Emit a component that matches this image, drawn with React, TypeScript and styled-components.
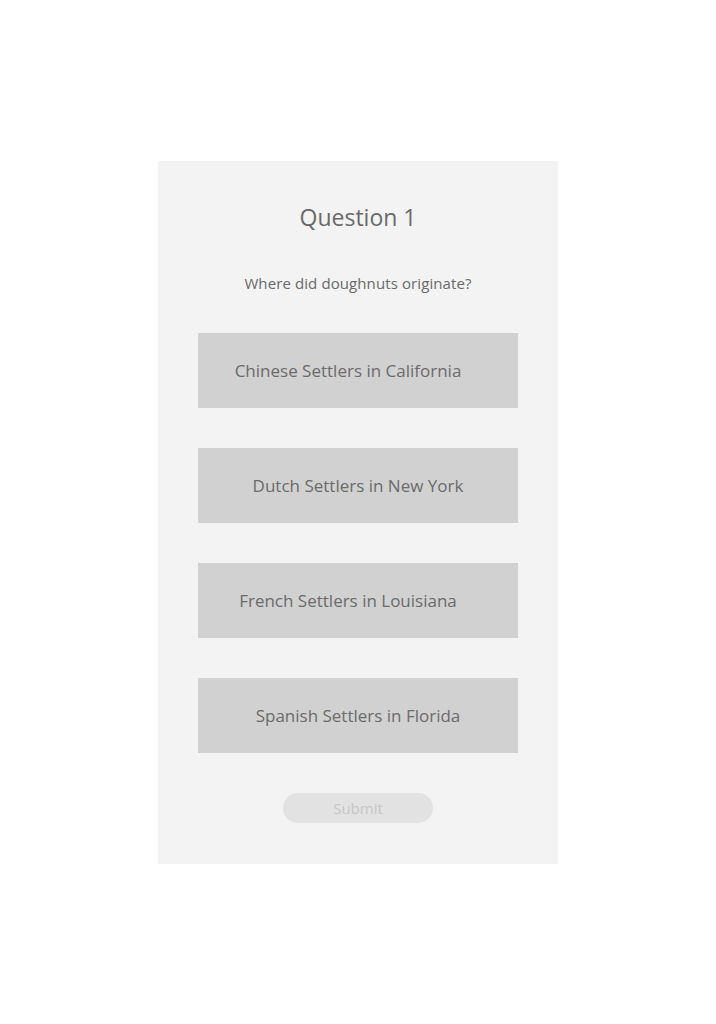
import React, { useState } from 'react';
import styled, { createGlobalStyle } from 'styled-components';

const GlobalStyle = createGlobalStyle`
  body {
    margin: 0;
    background: #ffffff;
    font-family: "Open Sans", "Noto Sans", sans-serif;
  }
`;

const Page = styled.div`
  display: flex;
  justify-content: center;
  padding-top: 161px;
`;

const Card = styled.div`
  width: 400px;
  height: 703px;
  box-sizing: border-box;
  background: #f3f3f3;
  display: flex;
  flex-direction: column;
  align-items: center;
  padding-top: 41px;
`;

const Title = styled.h2`
  margin: 0;
  font-size: 23px;
  font-weight: 400;
  color: #6a6a6a;
  line-height: 30px;
`;

const Prompt = styled.p`
  margin: 0;
  margin-top: 41px;
  font-size: 15px;
  letter-spacing: 0.1px;
  line-height: 20px;
  color: #6a6a6a;
`;

const Options = styled.div`
  display: flex;
  flex-direction: column;
  gap: 40px;
  margin-top: 40px;
`;

const Option = styled.button<{ $shift: number; $picked: boolean }>`
  width: 320px;
  height: 75px;
  border: none;
  padding: 0 ${({ $shift }) => ($shift > 0 ? $shift * 2 : 0)}px 0 0;
  background: ${({ $picked }) => ($picked ? '#c4c4c4' : '#d1d1d1')};
  color: #6b6b6b;
  font-family: inherit;
  font-size: 17px;
  cursor: pointer;
`;

const Submit = styled.button`
  margin-top: 40px;
  width: 150px;
  height: 30px;
  border: none;
  border-radius: 15px;
  background: #e2e2e2;
  color: #c6c6c6;
  font-family: inherit;
  font-size: 15px;
`;

const answers = [
  { text: 'Chinese Settlers in California', shift: 10 },
  { text: 'Dutch Settlers in New York', shift: 0 },
  { text: 'French Settlers in Louisiana', shift: 10 },
  { text: 'Spanish Settlers in Florida', shift: 0 },
];

const App: React.FC = () => {
  const [picked, setPicked] = useState<number | null>(null);

  return (
    <>
      <GlobalStyle />
      <Page>
        <Card>
          <Title>Question 1</Title>
          <Prompt>Where did doughnuts originate?</Prompt>
          <Options>
            {answers.map((a, i) => (
              <Option
                key={a.text}
                $shift={a.shift}
                $picked={picked === i}
                onClick={() => setPicked(i)}
              >
                {a.text}
              </Option>
            ))}
          </Options>
          <Submit disabled={picked === null}>Submit</Submit>
        </Card>
      </Page>
    </>
  );
};

export default App;
